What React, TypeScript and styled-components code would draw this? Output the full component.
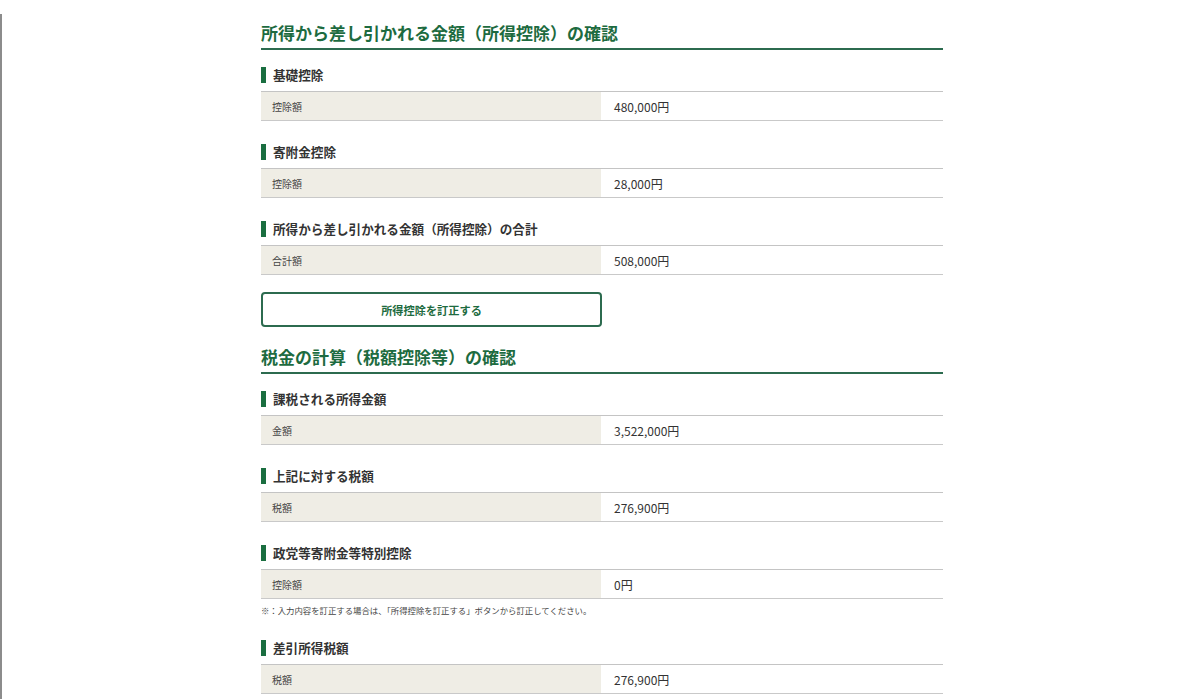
import React from "react";
import styled, { createGlobalStyle } from "styled-components";

const Global = createGlobalStyle`
  html, body { margin: 0; padding: 0; background: #fff; }
  body { font-family: "Noto Sans CJK JP", "Noto Sans", sans-serif; color: #333; }
`;

const Page = styled.div`
  display: flex;
  min-height: 699px;
`;

const Edge = styled.div`
  width: 2px;
  margin-top: 14px;
  background: #8c8c8c;
  flex: none;
`;

const Content = styled.main`
  flex: 1;
  display: flex;
  justify-content: center;
  padding-left: 2px;
`;

const Inner = styled.div`
  width: 682px;
  padding-top: 20px;
`;

const Heading = styled.h2`
  margin: 0;
  font-size: 17px;
  font-weight: 700;
  color: #1d6b40;
  line-height: 26px;
  padding-bottom: 2px;
  border-bottom: 2px solid #2c6b4f;
`;

const Sub = styled.h3<{ $top: number }>`
  margin: ${(p) => p.$top}px 0 8px;
  display: flex;
  align-items: center;
  gap: 7px;
  font-size: 12.6px;
  font-weight: 700;
  color: #333;
  line-height: 16px;
  &::before {
    content: "";
    width: 5px;
    height: 16px;
    background: #1a6e40;
    flex: none;
  }
`;

const Row = styled.div`
  display: grid;
  grid-template-columns: 340px 1fr;
  border-top: 1px solid #c4c4c4;
  border-bottom: 1px solid #c9c9c9;
  height: 28px;
`;

const Label = styled.div`
  background: #efede5;
  display: flex;
  align-items: center;
  padding-left: 11px;
  font-size: 10px;
  color: #444;
`;

const Value = styled.div`
  display: flex;
  align-items: center;
  padding-left: 13px;
  font-size: 12px;
  color: #333;
`;

const Button = styled.button`
  display: flex;
  align-items: center;
  justify-content: center;
  margin-top: 17px;
  width: 341px;
  height: 35px;
  border: 2px solid #2c6b4f;
  border-radius: 4px;
  background: #fff;
  color: #1d6b40;
  font-family: inherit;
  font-size: 11.2px;
  font-weight: 700;
  padding: 0;
`;

const Note = styled.p`
  margin: 5px 0 0;
  font-size: 8.4px;
  color: #444;
  line-height: 12px;
`;

type Item = { title: string; label: string; value: string; top: number };

const Block = ({ title, label, value, top }: Item) => (
  <>
    <Sub $top={top}>{title}</Sub>
    <Row>
      <Label>{label}</Label>
      <Value>{value}</Value>
    </Row>
  </>
);

export default function App() {
  return (
    <Page>
      <Global />
      <Edge />
      <Content>
        <Inner>
          <Heading>所得から差し引かれる金額（所得控除）の確認</Heading>
          <Block title="基礎控除" label="控除額" value="480,000円" top={17} />
          <Block title="寄附金控除" label="控除額" value="28,000円" top={23} />
          <Block
            title="所得から差し引かれる金額（所得控除）の合計"
            label="合計額"
            value="508,000円"
            top={23}
          />
          <Button>所得控除を訂正する</Button>
          <Heading style={{ marginTop: 17 }}>税金の計算（税額控除等）の確認</Heading>
          <Block title="課税される所得金額" label="金額" value="3,522,000円" top={17} />
          <Block title="上記に対する税額" label="税額" value="276,900円" top={23} />
          <Block title="政党等寄附金等特別控除" label="控除額" value="0円" top={23} />
          <Note>※：入力内容を訂正する場合は、「所得控除を訂正する」ボタンから訂正してください。</Note>
          <Block title="差引所得税額" label="税額" value="276,900円" top={24} />
        </Inner>
      </Content>
    </Page>
  );
}
